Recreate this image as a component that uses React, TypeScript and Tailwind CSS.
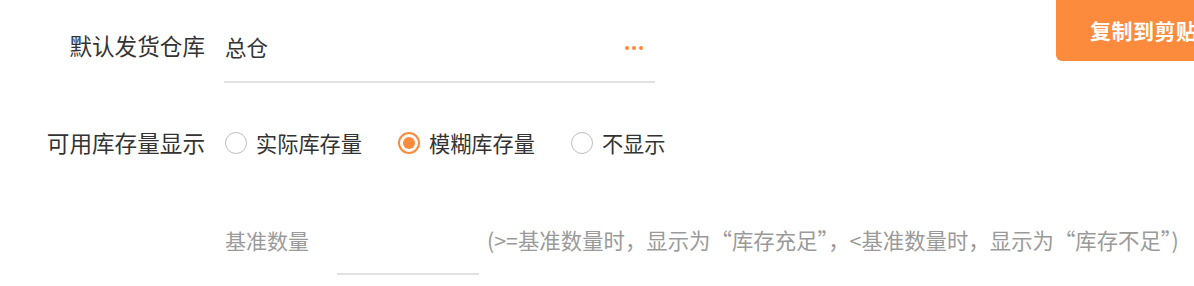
import { useState } from "react";

const options = ["实际库存量", "模糊库存量", "不显示"];

function Radio({ checked }: { checked: boolean }) {
  return checked ? (
    <span className="flex h-[22px] w-[22px] items-center justify-center rounded-full border-2 border-[#fb8a3c]">
      <span className="h-[12px] w-[12px] rounded-full bg-[#fb8a3c]" />
    </span>
  ) : (
    <span className="h-[22px] w-[22px] rounded-full border-[1.5px] border-[#bdbdbd]" />
  );
}

export default function App() {
  const [mode, setMode] = useState(1);

  return (
    <div
      className="flex h-[286px] w-[1194px] overflow-hidden bg-white text-[#333]"
      style={{ fontFamily: '"Noto Sans CJK SC", "Noto Sans", sans-serif' }}
    >
      <div className="min-w-0 flex-1 pt-[24px]">
        {/* default warehouse */}
        <div className="flex items-start">
          <div className="w-[205px] shrink-0 pt-[4px] text-right text-[22.6px] leading-[36px]">
            默认发货仓库
          </div>
          <div className="ml-[19px] flex h-[59px] w-[431px] shrink-0 items-start justify-between border-b-2 border-[#e2e2e2] pl-[1px] pr-[12px] pt-[5px]">
            <span className="text-[21.5px] leading-[36px]">总仓</span>
            <span className="flex gap-[3px] pt-[17px]">
              <span className="h-[4px] w-[4px] rounded-full bg-[#fb8a3c]" />
              <span className="h-[4px] w-[4px] rounded-full bg-[#fb8a3c]" />
              <span className="h-[4px] w-[4px] rounded-full bg-[#fb8a3c]" />
            </span>
          </div>
        </div>

        {/* stock display */}
        <div className="mt-[42px] flex items-center">
          <div className="w-[205px] shrink-0 text-right text-[22.6px] leading-[36px]">
            可用库存量显示
          </div>
          <div className="ml-[20px] flex items-center">
            {options.map((opt, i) => (
              <button
                key={opt}
                onClick={() => setMode(i)}
                className="mr-[36px] flex items-center gap-[9px] text-[21.2px] leading-[36px]"
              >
                <Radio checked={mode === i} />
                <span>{opt}</span>
              </button>
            ))}
          </div>
        </div>

        {/* threshold */}
        <div className="mt-[61px] flex items-start pl-[225px] leading-[36px] text-[#9a9a9a]">
          <span className="w-[112px] shrink-0 text-[21px]">基准数量</span>
          <span className="h-[53px] w-[142px] shrink-0 border-b-2 border-[#e2e2e2]" />
          <span className="ml-[8px] whitespace-nowrap text-[21.4px]">
            (&gt;=基准数量时，显示为“库存充足”，&lt;基准数量时，显示为“库存不足”)
          </span>
        </div>
      </div>

      <button className="mt-[-6px] mr-[-60px] h-[67px] w-[198px] shrink-0 rounded-[6px] bg-[#fc8b3d] pl-[34px] pt-[6px] text-left text-[21px] font-bold tracking-[0.5px] text-white">
        复制到剪贴板
      </button>
    </div>
  );
}
